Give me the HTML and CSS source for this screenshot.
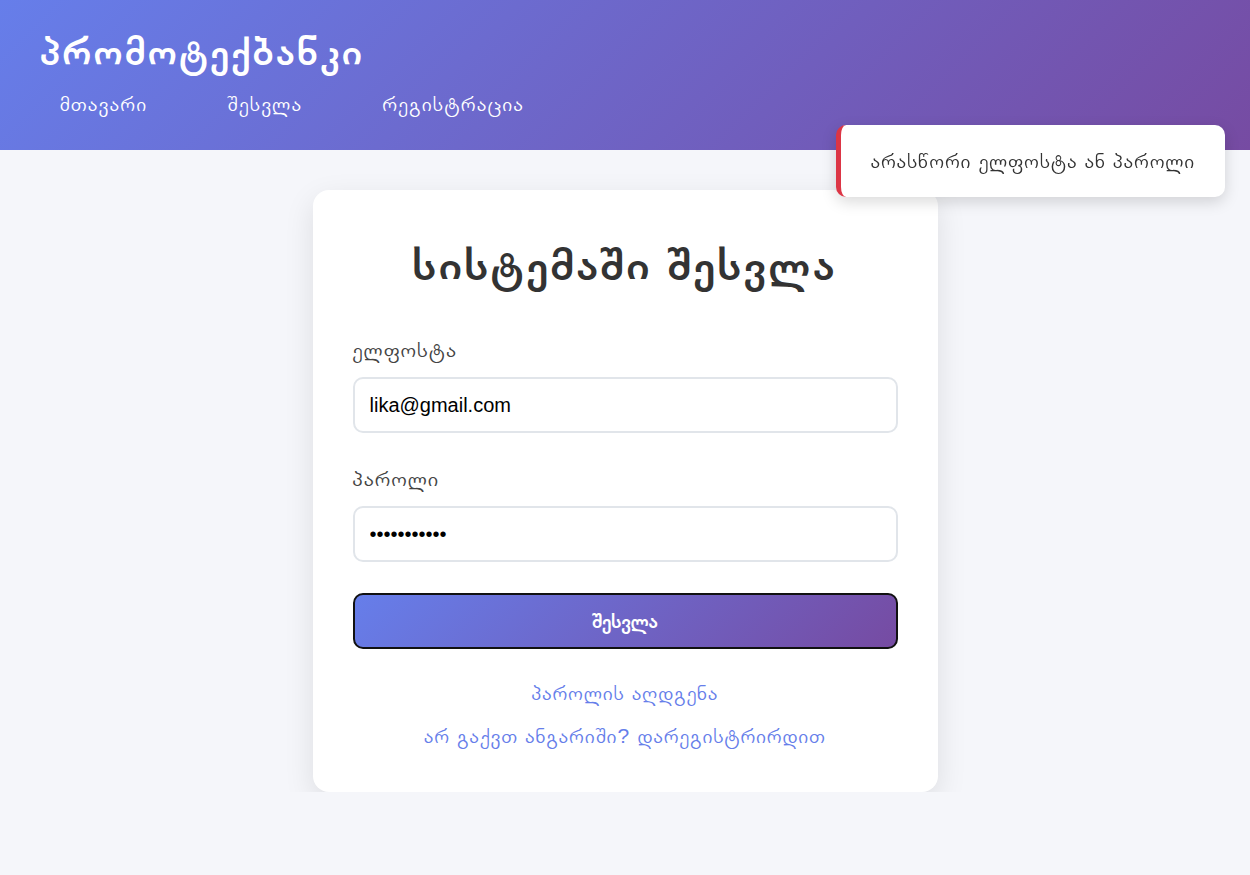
FILE: index.html
```html
<!DOCTYPE html>
<html lang="ka">
<head>
<meta charset="utf-8">
<title>პრომოტექბანკი</title>
<link rel="stylesheet" href="styles.css">
</head>
<body>
<header class="header">
  <div class="logo">პრომოტექბანკი</div>
  <nav class="nav">
    <a href="#" class="nav-link">მთავარი</a>
    <a href="#" class="nav-link">შესვლა</a>
    <a href="#" class="nav-link">რეგისტრაცია</a>
  </nav>
</header>

<main class="main">
  <div class="card">
    <h1 class="card-title">სისტემაში შესვლა</h1>
    <form class="form">
      <div class="form-group">
        <label class="label">ელფოსტა</label>
        <input class="input" type="email" value="lika@gmail.com">
      </div>
      <div class="form-group">
        <label class="label">პაროლი</label>
        <input class="input" type="password" value="12345678901">
      </div>
      <button type="button" class="btn">შესვლა</button>
    </form>
    <div class="links">
      <a href="#" class="link">პაროლის აღდგენა</a>
      <a href="#" class="link">არ გაქვთ ანგარიში? დარეგისტრირდით</a>
    </div>
  </div>
</main>

<div class="toast">არასწორი ელფოსტა ან პაროლი</div>
</body>
</html>
```

FILE: styles.css
```css
* { box-sizing: border-box; }
body {
  margin: 0;
  font-family: "Liberation Sans", FreeSans, sans-serif;
  background: #f5f6fa;
  color: #333;
}
.header {
  height: 150px;
  background: linear-gradient(135deg, #667eea 0%, #764ba2 100%);
  color: #fff;
  padding: 26px 40px 0;
}
.logo {
  font-size: 40px;
  font-weight: 700;
  line-height: 50px;
  letter-spacing: 2.8px;
}
.nav {
  display: flex;
  gap: 40px;
  margin-top: 8px;
}
.nav-link {
  color: #fff;
  text-decoration: none;
  font-size: 21px;
  letter-spacing: 1.6px;
  padding: 8px 20px;
}
.main {
  display: flex;
  justify-content: center;
  padding-top: 40px;
}
.card {
  width: 625px;
  background: #fff;
  border-radius: 16px;
  box-shadow: 0 10px 30px rgba(0,0,0,0.1);
  padding: 40px 40px 44px;
}
.card-title {
  text-align: center;
  font-size: 46px;
  font-weight: 700;
  letter-spacing: 3px;
  margin: 0 0 37px;
  color: #333;
  line-height: 68px;
}
.form-group {
  margin-bottom: 31px;
}
.label {
  display: block;
  font-size: 22px;
  letter-spacing: 1.5px;
  line-height: 30px;
  color: #444;
  margin-bottom: 12px;
}
.input {
  display: block;
  width: 100%;
  height: 56px;
  border: 2px solid #e1e5ea;
  border-radius: 10px;
  padding: 0 15px;
  font-size: 20px;
  font-family: "Liberation Sans", Arial, sans-serif;
  color: #000;
  background: #fff;
}
.btn {
  display: block;
  width: 100%;
  height: 56px;
  border: 2px solid #111;
  border-radius: 10px;
  background: linear-gradient(135deg, #667eea 0%, #764ba2 100%);
  color: #fff;
  font-family: "Liberation Sans", FreeSans, sans-serif;
  font-size: 20px;
  font-weight: 700;
}
.links {
  display: flex;
  flex-direction: column;
  align-items: center;
  gap: 19px;
  margin-top: 32px;
}
.link {
  color: #667eea;
  text-decoration: none;
  font-size: 21px;
  letter-spacing: 1.3px;
  line-height: 24px;
}
.toast {
  position: fixed;
  top: 125px;
  right: 25px;
  width: 389px;
  height: 72px;
  background: #fff;
  border-left: 5px solid #dc3545;
  border-radius: 10px;
  box-shadow: 0 5px 15px rgba(0,0,0,0.15);
  display: flex;
  align-items: center;
  justify-content: center;
  font-size: 21px;
  letter-spacing: 1.3px;
  color: #333;
}
```
